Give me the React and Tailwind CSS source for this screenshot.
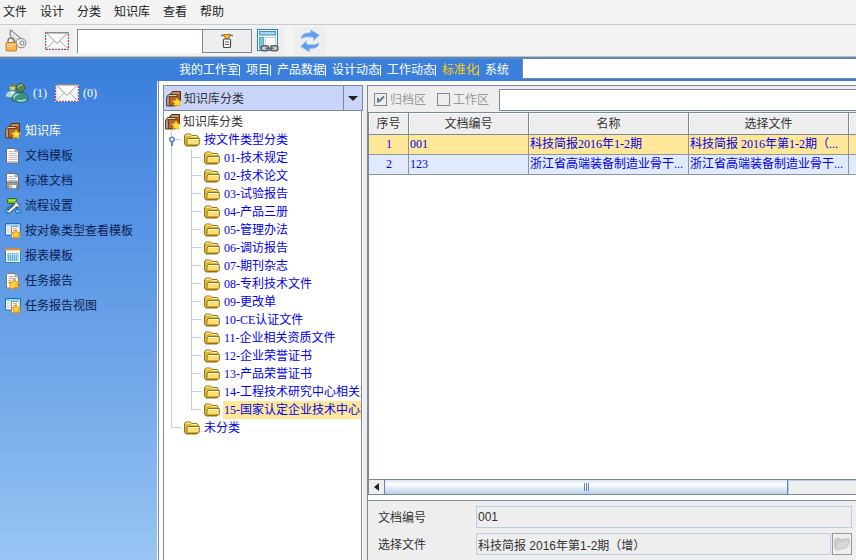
import { useState } from 'react';

const MENUS = ['文件', '设计', '分类', '知识库', '查看', '帮助'];
const TABS = ['我的工作室', '项目', '产品数据', '设计动态', '工作动态', '标准化', '系统'];

const CATEGORIES = [
  '01-技术规定', '02-技术论文', '03-试验报告', '04-产品三册', '05-管理办法',
  '06-调访报告', '07-期刊杂志', '08-专利技术文件', '09-更改单', '10-CE认证文件',
  '11-企业相关资质文件', '12-企业荣誉证书', '13-产品荣誉证书',
  '14-工程技术研究中心相关文', '15-国家认定企业技术中心相',
];

const DOCS = [
  { id: 1, code: '001', name: '科技简报2016年1-2期', shortFile: '科技简报 2016年第1-2期（...', file: '科技简报 2016年第1-2期（增）' },
  { id: 2, code: '123', name: '浙江省高端装备制造业骨干...', shortFile: '浙江省高端装备制造业骨干...', file: '浙江省高端装备制造业骨干...' },
];

/* ---------- icons ---------- */

const STAR = 'M11 6.500l1.500 3 3.200.4-2.400 2.300.7 3.300-3-1.600-3 1.600.7-3.300-2.300-2.300 3.200-.4z';

function BooksIcon() {
  return (
    <svg width="16" height="16" viewBox="0 0 16 16" className="shrink-0">
      <path d="M4.500 3L6.500.5h8v9.500H5z" fill="#a85a28" stroke="#5f3010" />
      <path d="M6.500 2h7" stroke="#f3dcc0" strokeWidth=".8" />
      <path d="M.5 6.500l2-3h8.500v10l-1 1.500H.5z" fill="#8a7b70" stroke="#5a4433" />
      <path d="M3.500 5.500h7.500v9H3.500z" fill="#b5642c" stroke="#6b3510" strokeWidth=".8" />
      <path d="M2.500 4.500h8" stroke="#f3dcc0" strokeWidth=".8" />
      <path d="M2 7v7" stroke="#d5cdc5" strokeWidth=".8" />
      <path d={STAR} fill="#ffdf3c" stroke="#e8a416" strokeWidth=".7" />
    </svg>
  );
}

function PageIcon() {
  return (
    <svg width="16" height="16" viewBox="0 0 16 16" className="shrink-0">
      <path d="M2 .5h8.500l3 3v11.500H1.500V1z" fill="#fafafa" stroke="#6f6f6f" />
      <path d="M10 .8v3h3.300" fill="#e4e4e4" stroke="#777" strokeWidth=".8" />
      <path d="M3.500 3.500h5M3.500 5.500h7M3.500 7.500h8.500M3.500 9.500h8.500M3.500 11.500h8.500M3.500 13.500h8.500" stroke="#bdbdbd" />
    </svg>
  );
}

function SavedPageIcon() {
  return (
    <svg width="16" height="16" viewBox="0 0 16 16" className="shrink-0">
      <path d="M2 .5h8.500l3 3v11.500H1.500V1z" fill="#fafafa" stroke="#6f6f6f" />
      <path d="M10 .8v3h3.300" fill="#e4e4e4" stroke="#777" strokeWidth=".8" />
      <path d="M3.500 3.500h5M3.500 5.500h7M3.500 7.500h8.500" stroke="#bdbdbd" />
      <path d="M1.500 9h12v6.500h-12z" fill="#9d9d9d" stroke="#666" />
      <path d="M4 11.500h7.500v4H4z" fill="#f5f5f5" stroke="#777" strokeWidth=".6" />
      <path d="M6 12.500v2.500" stroke="#666" />
    </svg>
  );
}

function FlowIcon() {
  return (
    <svg width="16" height="16" viewBox="0 0 16 16" className="shrink-0">
      <path d="M7 5v4H3v3M7 9h5v3" fill="none" stroke="#1d4d8a" />
      <rect x="2.500" y=".5" width="9" height="5" rx="1" fill="#78c41c" stroke="#2f6d12" />
      <path d="M4 2.200h6" stroke="#c9f08f" />
      <rect x=".5" y="11.500" width="5" height="3.500" rx="1" fill="#58c0f2" stroke="#0e6aa8" />
      <rect x="10.500" y="11.500" width="5" height="3.500" rx="1" fill="#58c0f2" stroke="#0e6aa8" />
      <path d="M3.500 14L12 6.500" stroke="#44484c" strokeWidth="3.600" />
      <path d="M11 3.500c-2 2-1.500 4 0 5s3.500.5 4.300-1.500l-2.300-.5-.5-1.500z" fill="#f6f6f6" stroke="#44484c" strokeWidth=".8" />
      <path d="M3.500 14L12 6.500" stroke="#f6f6f6" strokeWidth="2.200" />
    </svg>
  );
}

function WindowReportIcon() {
  return (
    <svg width="16" height="16" viewBox="0 0 16 16" className="shrink-0">
      <path d="M.5.5h15v11.500H.5z" fill="#fff" stroke="#1576b0" />
      <path d="M1 2h14" stroke="#8fd3f7" strokeWidth="2" />
      <path d="M2 4h4v6H2z" fill="#dfe2e6" />
      <path d="M6.500 3.500h6.500l2 2v9.500H6.500z" fill="#fafafa" stroke="#888" strokeWidth=".9" />
      <path d="M8 5.500h4M8 7.500h3" stroke="#b5b5b5" />
      <path d={STAR} fill="#ffd23a" stroke="#e08c08" />
    </svg>
  );
}

function ReportTableIcon() {
  return (
    <svg width="16" height="16" viewBox="0 0 16 16" className="shrink-0">
      <path d="M.5 1.500h15v13H.5z" fill="#fff" stroke="#2a84b8" />
      <path d="M0 1.500h16" stroke="#f08a24" strokeWidth="2" />
      <path d="M1 2.500h14" stroke="#ffd08a" strokeWidth=".8" />
      <path d="M2.500 5h11v8h-11z" fill="#63b0dc" />
      <path d="M4.500 5v8M6.500 5v8M8.500 5v8M10.500 5v8M12.500 5v8M2.500 6.500h11" stroke="#d9effa" strokeWidth=".6" />
    </svg>
  );
}

function TaskReportIcon() {
  return (
    <svg width="16" height="16" viewBox="0 0 16 16" className="shrink-0">
      <path d="M2 .5h8.500l3 3v11.500H1.500V1z" fill="#fafafa" stroke="#8a7464" />
      <path d="M10 .8v3h3.300" fill="#e4e4e4" stroke="#777" strokeWidth=".8" />
      <path d="M3.500 3.500h5M3.500 5.500h7M3.500 7.500h3M3.500 9.500h2" stroke="#b0b0b0" />
      <path d="M9.500 5.500l1.500 3.500 3.500.2-2 2.500 1.500 3.500-3.500-.8-3 1.200H4.500l1-3.600-1.500-2.500 3.800-.5z" fill="#ffcf40" stroke="#de8a08" />
    </svg>
  );
}

function FolderIcon() {
  return (
    <svg width="16" height="14" viewBox="0 0 16 14" className="shrink-0">
      <path d="M.5 11V2.500L2 1h4.500L8 2.500h5L14 3.500V12l-1 1H2z" fill="#e0b834" stroke="#94731a" />
      <path d="M1.800 3l.8-1h3.500l1.500 1.500H13" fill="none" stroke="#fff3a8" />
      <path d="M3 12.500V7l1-1.500h11.300v5.500L14 12.500z" fill="#f8df78" stroke="#94731a" />
      <path d="M4.200 6.500h10.300" stroke="#fffbd0" />
      <path d="M4 11.500h10" stroke="#d6a52a" />
    </svg>
  );
}

function MailIcon() {
  return (
    <svg width="24" height="18" viewBox="0 0 24 18" className="shrink-0">
      <rect x=".5" y=".5" width="23" height="17" fill="#f7f7f7" stroke="#e3e3e3" />
      <path d="M.5 0v17.500h23V0" fill="none" stroke="#d83030" strokeWidth="1.400" strokeDasharray="2 4" />
      <path d="M.5 0v17.500h23V0" fill="none" stroke="#3f82b8" strokeWidth="1.400" strokeDasharray="2 4" strokeDashoffset="3" />
      <path d="M0 .5h24" stroke="#7e8794" />
      <path d="M2 16l7.500-7.500M22 16l-7.500-7.500" stroke="#b4b4b4" />
      <path d="M1.500 1L12 11.500 22.500 1z" fill="#fafafa" stroke="#929292" />
      <path d="M3 2.500l9 8.500 9-8.500" fill="none" stroke="#d0d0d0" strokeWidth=".7" />
    </svg>
  );
}

function PeopleIcon() {
  return (
    <svg width="24" height="20" viewBox="0 0 24 20" className="shrink-0">
      <circle cx="7.500" cy="4.500" r="3.400" fill="#c3cc9c" stroke="#56713c" strokeWidth=".8" />
      <path d="M4.500 3.500a3.200 3.200 0 016 0z" fill="#587d3c" />
      <path d="M.5 13.500c0-3.500 2-5.500 6-5.500s5 2 5 5.500c-3 1.500-8 1.500-11 0z" fill="#a9dce0" stroke="#4c8c98" strokeWidth=".8" />
      <path d="M5.500 8.500l2 4 2-4z" fill="#fff" />
      <circle cx="15.500" cy="4.800" r="4.300" fill="#5b8648" stroke="#2c4f2c" strokeWidth=".8" />
      <path d="M12.500 4.500c1-2 2.500-3 5-2.500" fill="none" stroke="#a3c48a" strokeWidth="1.300" />
      <path d="M6.800 16.500c0-4.500 3.500-7 8.700-7s8 2.500 8 7c-4 3.500-12.700 3.500-16.700 0z" fill="#3f8f88" stroke="#235a60" strokeWidth=".8" />
      <path d="M9 15.500c0-2.500 2-4 4.500-4.500M12 17.500c3 .7 6 .5 9-.8" fill="none" stroke="#a8dcc2" strokeWidth="1.600" />
    </svg>
  );
}

function LockKeyIcon() {
  return (
    <svg width="22" height="23" viewBox="0 0 22 23">
      <path d="M5.500.8l-.5 5 2 4 7 6 3-5.500z" fill="#dedede" stroke="#6b6b6b" strokeWidth=".9" />
      <path d="M6.500 4l9 7.500" stroke="#fff" />
      <path d="M11 13c0-2.500 2-3.500 5-3.500s4.800 1.500 4.800 4.500-2 4.800-5 4.800-4.800-2-4.800-5.800z" fill="#e9e9e9" stroke="#7d7d7d" strokeWidth=".9" />
      <circle cx="17" cy="14" r="1.900" fill="#fafafa" stroke="#777" strokeWidth=".9" />
      <path d="M3 14v-2a3 3 0 016 0v2" fill="none" stroke="#858585" strokeWidth="1.600" />
      <rect x="1" y="13.500" width="10.500" height="8.500" rx="1" fill="#fab04c" stroke="#c8741a" strokeWidth=".9" />
      <path d="M2 15.500h8.500M2 17.500h6" stroke="#ffe3a0" />
    </svg>
  );
}

function FilterDocIcon() {
  return (
    <svg width="12" height="14" viewBox="0 0 12 14">
      <path d="M0 1.500h12" stroke="#3b8db8" strokeWidth="1.600" />
      <path d="M2.500.5h7L7.500 4.500h-3z" fill="#f7b52a" stroke="#a8600d" strokeWidth=".8" />
      <rect x="2.500" y="5" width="7" height="8.500" rx="1" fill="#fff" stroke="#4a4a4a" strokeWidth="1.200" />
      <path d="M4 8h4M4 10.500h4" stroke="#555" />
    </svg>
  );
}

function LinkedWindowIcon() {
  return (
    <svg width="22" height="23" viewBox="0 0 22 23">
      <rect x=".5" y=".5" width="20" height="21" fill="#f3f9fd" stroke="#2782bb" />
      <rect x="2.500" y="2.500" width="16" height="3.500" fill="#a3d5f2" stroke="#3f92c4" />
      <rect x="2.500" y="8.500" width="4" height="11" fill="#7cc0ea" stroke="#5aa8d6" />
      <rect x="8.500" y="8.500" width="10" height="8" fill="#fff" stroke="#c9d0d6" />
      <g fill="#c9cccf" stroke="#5e6468" strokeWidth="1.500">
        <rect x="4" y="16.800" width="7.500" height="5" rx="2.500" />
        <rect x="13.500" y="16.800" width="7.500" height="5" rx="2.500" />
        <path d="M8.500 19.300h8" />
      </g>
    </svg>
  );
}

function RefreshIcon() {
  return (
    <svg width="22" height="24" viewBox="0 0 22 24">
      <path d="M2 10c0-4.500 4-6.500 9.500-6.200V.8l9 5.200-6 5.800V8.500C10 7.500 5 7.500 2 10z" fill="#5d9dec" stroke="#a5c9f5" strokeWidth=".8" />
      <path d="M20 13.500c0 4.500-4 6.500-9.500 6.200v3.300L1.500 17.500l6-5.800V15c4.500 1 9.500 1 12.500-1.500z" fill="#5d9dec" stroke="#a5c9f5" strokeWidth=".8" />
    </svg>
  );
}

function GreyFolderIcon() {
  return (
    <svg width="16" height="14" viewBox="0 0 16 14">
      <path d="M.5 3L2 1.500h4l1 1 7.500-1 .8 1.500-.3 4-3.500 4L3 13 1 11.500z" fill="#cdcdcd" stroke="#bdbdbd" strokeWidth=".8" />
      <path d="M2.500 12.500L4 6.500l10.500-2.500-3 6z" fill="#dadada" />
    </svg>
  );
}

/* ---------- sidebar ---------- */

const NAV = [
  { label: '知识库', icon: BooksIcon },
  { label: '文档模板', icon: PageIcon },
  { label: '标准文档', icon: SavedPageIcon },
  { label: '流程设置', icon: FlowIcon },
  { label: '按对象类型查看模板', icon: WindowReportIcon },
  { label: '报表模板', icon: ReportTableIcon },
  { label: '任务报告', icon: TaskReportIcon },
  { label: '任务报告视图', icon: WindowReportIcon },
];

function Sidebar() {
  const [active, setActive] = useState('知识库');
  return (
    <aside className="w-[157px] shrink-0 bg-linear-to-b from-[#3c81de] via-[#74a9ea] via-65% to-[#97c6f4]">
      <div className="flex items-center h-6 pl-[5px] text-white font-['Liberation_Serif',serif]">
        <PeopleIcon />
        <span className="ml-1">(1)</span>
        <span className="ml-2 mr-1"><MailIcon /></span>
        <span>(0)</span>
      </div>
      <nav className="flex flex-col pt-[13px]">
        {NAV.map(({ label, icon: Icon }) => (
          <button key={label} onClick={() => setActive(label)}
            className={`flex items-center gap-1 h-[25px] pl-[5px] ${label === active ? 'text-white' : 'text-[#0b2150]'}`}>
            <Icon /> {label}
          </button>
        ))}
      </nav>
    </aside>
  );
}

/* ---------- category tree ---------- */

// elbow joining a node to the vertical guide of its parent
function Elbow({ last }) {
  return (
    <span className="flex flex-col w-[13px] h-full shrink-0">
      <span className="w-[10px] h-1/2 border-l border-b border-[#b8cfe5]" />
      <span className={`w-[10px] h-1/2 ${last ? '' : 'border-l border-[#b8cfe5]'}`} />
    </span>
  );
}

function TreeRow({ label, selected, onClick }) {
  return (
    <button onClick={onClick} className="flex items-center gap-[3px] h-full">
      <FolderIcon />
      <span className={`h-[18px] pl-px whitespace-nowrap ${selected ? 'bg-[#ffe799]' : ''}`}>{label}</span>
    </button>
  );
}

function CategoryTree() {
  const [selected, setSelected] = useState(CATEGORIES[14]);
  return (
    <ul className="flex-1 min-h-0 overflow-hidden bg-white border-x border-[#7a8a99] mr-px pt-[2px] leading-[18px] text-[#0000ee] font-['Liberation_Serif','Noto_Sans_CJK_SC',serif]">
      <li className="flex items-center gap-[2px] h-[18px] pl-px text-[#333]"><BooksIcon /> 知识库分类</li>
      <li className="flex items-center h-[18px] pl-[3px]">
        <svg width="17" height="18" viewBox="0 0 17 18" className="shrink-0">
          <path d="M4.500 0v18M7 8.500h7" stroke="#b8cfe5" />
          <path d="M5 10v5" stroke="#5f82bd" strokeWidth="2" />
          <circle cx="5" cy="8.500" r="2.200" fill="#fff" stroke="#5f82bd" strokeWidth="1.600" />
        </svg>
        <TreeRow label="按文件类型分类" />
      </li>
      {CATEGORIES.map((c, i) => (
        <li key={c} className="flex h-[18px] pl-[7px]">
          <span className="w-5 h-full shrink-0 border-l border-[#b8cfe5]" />
          <Elbow last={i === CATEGORIES.length - 1} />
          <TreeRow label={c} selected={c === selected} onClick={() => setSelected(c)} />
        </li>
      ))}
      <li className="flex h-[18px] pl-[7px]">
        <Elbow last />
        <TreeRow label="未分类" />
      </li>
    </ul>
  );
}

/* ---------- documents ---------- */

function DocTable({ selected, onSelect }) {
  const th = 'h-[22px] p-0 font-normal text-center bg-[#eee] border-r border-b border-[#7a8a99] shadow-[inset_1px_1px_0_#fff]';
  const td = 'h-5 p-0 pl-px border-r border-b border-[#8f959c] whitespace-nowrap';
  return (
    <div className="flex-1 min-h-0 overflow-hidden bg-white">
      <table className="table-fixed w-[560px] border-separate border-spacing-0 leading-[19px]">
        <colgroup>
          <col className="w-10" /><col className="w-[120px]" /><col className="w-40" /><col className="w-40" /><col />
        </colgroup>
        <thead className="text-[#333]">
          <tr>
            <th className={`${th} pt-px`}>序号</th>
            <th className={`${th} pt-px`}>文档编号</th>
            <th className={`${th} pt-px`}>名称</th>
            <th className={`${th} pt-px`}>选择文件</th>
            <th className={th} />
          </tr>
        </thead>
        <tbody className="text-[#0000ee] font-['Liberation_Serif','Noto_Sans_CJK_SC',serif]">
          {DOCS.map((d) => (
            <tr key={d.id} onClick={() => onSelect(d)} className={d.id === selected.id ? 'bg-[#ffe799]' : 'bg-[#e0eafc]'}>
              <td className={`${td} text-center`}>{d.id}</td>
              <td className={td}>{d.code}</td>
              <td className={td}>{d.name}</td>
              <td className={td}>{d.shortFile}</td>
              <td className={td} />
            </tr>
          ))}
        </tbody>
      </table>
    </div>
  );
}

function HScrollBar() {
  return (
    <div className="flex h-4 shrink-0 bg-[#eee] border-y border-[#7a8a99]">
      <button aria-label="向左滚动" className="flex items-center justify-center w-[15px] shrink-0">
        <svg width="5" height="8" viewBox="0 0 5 8"><path d="M5 0v8L0 4z" fill="#222" /></svg>
      </button>
      <div className="flex items-center justify-center gap-px flex-6 border-x border-[#6382bf] bg-linear-to-b from-[#d6e4f2] via-white via-30% to-[#b8cfe5]">
        <span className="w-px h-2 bg-[#6382bf]" />
        <span className="w-px h-2 bg-[#6382bf]" />
        <span className="w-px h-2 bg-[#6382bf]" />
      </div>
      <div className="flex-1 border-t border-l border-[#b8cfe5]" />
    </div>
  );
}

function FilterBar() {
  const box = 'appearance-none size-[13px] border border-[#7a8a99]';
  return (
    <div className="flex items-center h-[26px] shrink-0 pt-px pl-[6px] text-[#999]">
      <label className="flex items-center gap-[3px]">
        <span className="grid">
          <input type="checkbox" defaultChecked disabled className={`${box} peer [grid-area:1/1]`} />
          <svg width="13" height="13" viewBox="0 0 13 13" className="[grid-area:1/1] invisible peer-checked:visible">
            <path d="M4 5v4.500M5 8.500L10 3.500" fill="none" stroke="#5f7890" strokeWidth="2" />
          </svg>
        </span>
        归档区
      </label>
      <label className="flex items-center gap-[3px] ml-[11px]">
        <input type="checkbox" disabled className={box} />
        工作区
      </label>
      <input aria-label="筛选" className="flex-1 min-w-0 h-[22px] ml-[10px] bg-white border border-r-0 border-[#7a8a99] px-1 text-[#333] outline-none" />
    </div>
  );
}

function DetailForm({ doc }) {
  const field = 'flex-1 min-w-0 h-[22px] px-px border border-[#b8cfe5] bg-[#eee] text-[#333] outline-none';
  return (
    <div className="flex flex-col gap-[5px] shrink-0 h-[60px] pt-[5px] pl-[10px] pr-1 border-t border-[#7a8a99] bg-[#eee] text-[#333]">
      <div className="flex items-center">
        <label htmlFor="doc-code" className="w-[98px] pt-[2px]">文档编号</label>
        <input id="doc-code" readOnly value={doc.code} className={field} />
      </div>
      <div className="flex items-center">
        <label htmlFor="doc-file" className="w-[98px] pt-[2px]">选择文件</label>
        <input id="doc-file" readOnly value={doc.file} className={field} />
        <button disabled aria-label="打开文件" className="flex items-center justify-center w-5 h-[22px] ml-px border border-[#999]">
          <GreyFolderIcon />
        </button>
      </div>
    </div>
  );
}

export default function App() {
  const [tab, setTab] = useState('标准化');
  const [doc, setDoc] = useState(DOCS[0]);
  const tool = 'flex items-center justify-center h-7 bg-[#eee] shrink-0';

  return (
    <div className="flex flex-col h-screen overflow-hidden bg-white text-[12px] leading-4 font-['Liberation_Sans','Noto_Sans_CJK_SC',sans-serif]">
      <div className="flex items-center gap-[13px] h-[25px] shrink-0 pl-[3px] bg-[#f3f3f3] border-b border-[#c9c9c9] text-[#222]">
        {MENUS.map((m) => <button key={m}>{m}</button>)}
      </div>

      <div className="flex items-center h-8 shrink-0 bg-[#f3f3f3] border-b border-[#c0c2c4]">
        <button aria-label="权限" className={`${tool} w-[31px]`}><LockKeyIcon /></button>
        <button aria-label="消息" className={`${tool} w-8 ml-[10px]`}><MailIcon /></button>
        <input aria-label="快速查询" className="w-[125px] h-6 ml-1 px-1 bg-white border-t border-l border-[#8a8a8a] outline-none" />
        <button aria-label="查询" className="flex items-center justify-center w-[50px] h-6 bg-[#eee] border border-[#7a8a99]"><FilterDocIcon /></button>
        <button aria-label="关联视图" className={`${tool} w-8`}><LinkedWindowIcon /></button>
        <button aria-label="刷新" className={`${tool} w-8 ml-[10px]`}><RefreshIcon /></button>
      </div>

      <div className="flex h-6 shrink-0 pl-[179px] bg-[#3b7fdc] border-t-2 border-[#5f87b3] text-white">
        <nav className="flex items-center gap-[6px] pr-[13px]">
          {TABS.map((t, i) => (
            <button key={t} onClick={() => setTab(t)}
              className={`flex items-center shrink-0 ${t === tab ? 'text-[#ffcc00]' : ''}`}>
              {t}
              {i < TABS.length - 1 && <span className="w-px h-[11px] bg-current" />}
            </button>
          ))}
        </nav>
        <input aria-label="搜索" className="flex-1 min-w-0 h-5 px-1 bg-white border-l border-b border-[#7a8a99] text-[#333] outline-none" />
      </div>

      <div className="flex flex-1 min-h-0">
        <Sidebar />
        <div className="flex flex-1 min-w-0 ml-px border-l border-[#7a8a99] pl-1 pt-1">
          <section className="flex flex-col w-[200px] shrink-0 text-[#333]">
            <div className="flex h-[26px] shrink-0 border border-[#7a8a99] bg-[#c8d5f9]">
              <div className="flex flex-1 items-center gap-[2px] pt-px pl-[2px]"><BooksIcon /> 知识库分类</div>
              <button aria-label="展开" className="flex items-center justify-center w-[19px] border-l border-[#7a8a99]">
                <svg width="10" height="5" viewBox="0 0 10 5"><path d="M0 0h10L5 5z" fill="#222" /></svg>
              </button>
            </div>
            <CategoryTree />
          </section>
          <div className="w-1 shrink-0 bg-[#eee]" />
          <section className="flex flex-col flex-1 min-w-0 bg-[#eee] border-l border-t border-[#7a8a99]">
            <FilterBar />
            <div className="flex flex-col flex-1 min-h-0 border-t border-l border-[#7a8a99]">
              <DocTable selected={doc} onSelect={setDoc} />
              <HScrollBar />
            </div>
            <div className="h-[5px] shrink-0 bg-white" />
            <DetailForm doc={doc} />
          </section>
        </div>
      </div>
    </div>
  );
}
